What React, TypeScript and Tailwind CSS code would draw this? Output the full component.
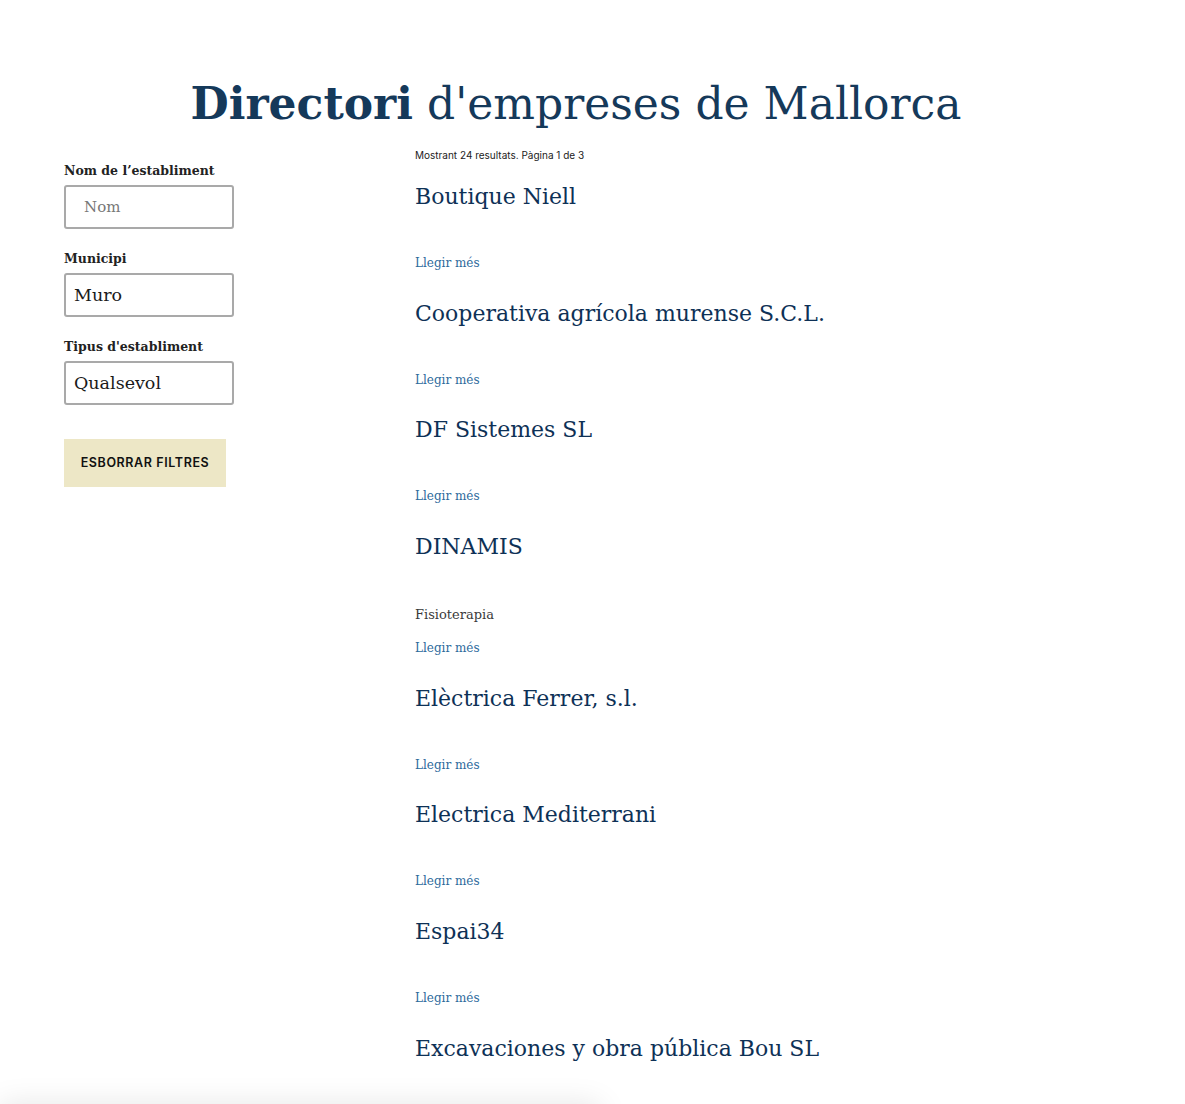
import React from "react";

const serif = "font-['DejaVu_Serif',serif]";

type Item = { name: string; desc?: string };

const items: Item[] = [
  { name: "Boutique Niell" },
  { name: "Cooperativa agrícola murense S.C.L." },
  { name: "DF Sistemes SL" },
  { name: "DINAMIS", desc: "Fisioterapia" },
  { name: "Elèctrica Ferrer, s.l." },
  { name: "Electrica Mediterrani" },
  { name: "Espai34" },
  { name: "Excavaciones y obra pública Bou SL" },
];

function Field({ label, value, placeholder }: { label: string; value?: string; placeholder?: string }) {
  return (
    <div className="flex flex-col">
      <label className={`${serif} text-[12.5px] leading-[20px] font-bold text-[#222] mb-1`}>{label}</label>
      <div className="w-[170px] h-[44px] border-2 border-[#a9a9a9] rounded-[3px] bg-white flex items-center">
        {value ? (
          <span className={`${serif} text-[17.5px] text-[#1a1a1a] pl-[8px]`}>{value}</span>
        ) : (
          <span className={`${serif} text-[15px] text-[#777] pl-[18px]`}>{placeholder}</span>
        )}
      </div>
    </div>
  );
}

export default function App() {
  return (
    <div className="min-h-[1104px] bg-white relative overflow-hidden">
      <div className="w-[1024px] ml-16">
        <h1 className={`${serif} text-center text-[44px] leading-[56px] text-[#15395a] pt-[76px]`}>
          <span className="font-bold">Directori</span>{" "}
          <span className="font-light">d'empreses de Mallorca</span>
        </h1>
        <div className="flex mt-4">
          <aside className="w-[351px] shrink-0 pt-[13px] flex flex-col">
            <Field label="Nom de l’establiment" placeholder="Nom" />
            <div className="h-5" />
            <Field label="Municipi" value="Muro" />
            <div className="h-5" />
            <Field label="Tipus d'establiment" value="Qualsevol" />
            <button className="mt-[34px] w-[162px] h-[48px] bg-[#ede7c6] font-['Inter',sans-serif] text-[12.5px] font-semibold tracking-[0.6px] text-[#111] text-center">
              ESBORRAR FILTRES
            </button>
          </aside>
          <main className="flex-1 flex flex-col">
            <p className="font-['Inter',sans-serif] text-[10px] leading-[14px] text-[#222] mb-[19px]">
              Mostrant 24 resultats. Pàgina 1 de 3
            </p>
            {items.map((it) => (
              <article key={it.name} className="flex flex-col mb-[24.7px]">
                <h2 className={`${serif} text-[22px] leading-[32px] text-[#0e3156] mb-[40px]`}>{it.name}</h2>
                {it.desc && (
                  <p className={`${serif} text-[13px] leading-[20px] text-[#3a3a3a] -mt-[38px] mb-[13px] pt-[40px]`}>
                    {it.desc}
                  </p>
                )}
                <a className={`${serif} text-[12px] leading-[20px] text-[#2d6a9c]`}>Llegir més</a>
              </article>
            ))}
          </main>
        </div>
      </div>
      <div className="fixed left-0 top-[1104px] w-[600px] h-[40px] bg-white shadow-[0_0_30px_rgba(0,0,0,0.1)]" />
    </div>
  );
}
